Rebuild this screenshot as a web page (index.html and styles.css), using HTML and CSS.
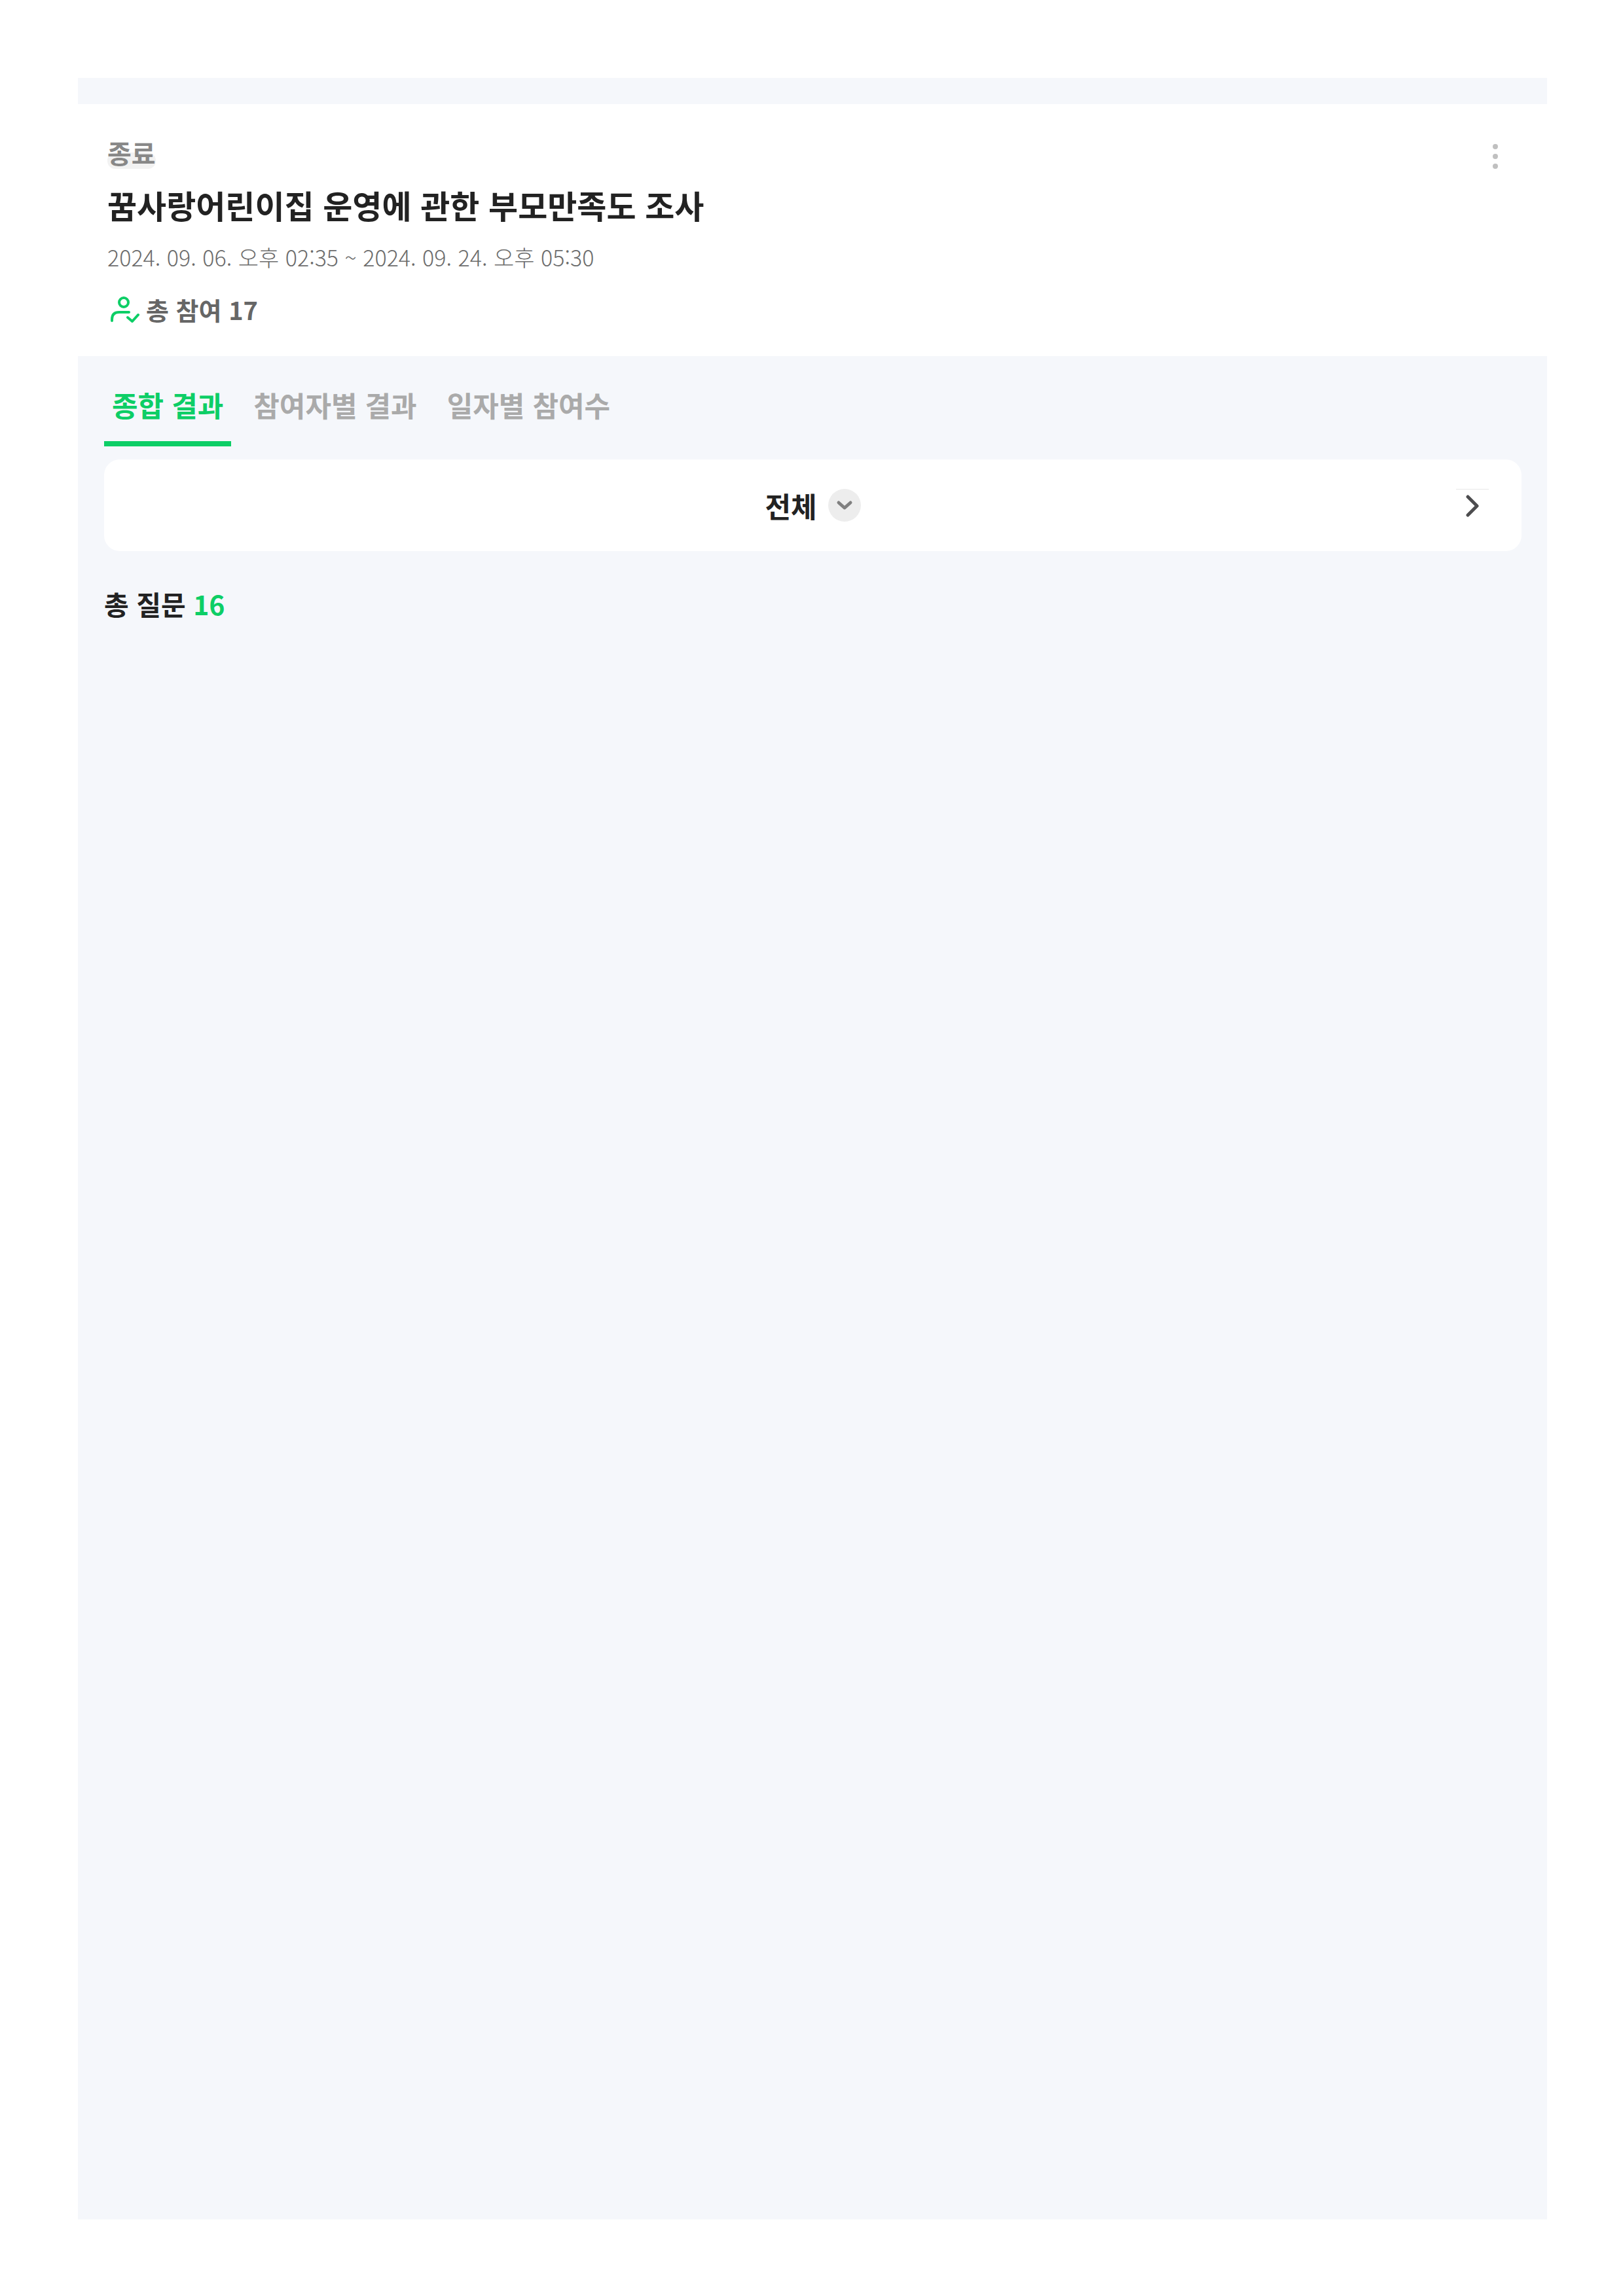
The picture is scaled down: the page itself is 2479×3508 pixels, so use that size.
FILE: index.html
```html
<!DOCTYPE html>
<html lang="ko">
<head>
<meta charset="UTF-8">
<meta name="viewport" content="width=device-width, initial-scale=1.0">
<title>꿈사랑어린이집 운영에 관한 부모만족도 조사</title>
<link rel="stylesheet" href="styles.css">
</head>
<body>

<div class="page">
    <header class="survey-header">
        <div class="survey-info">
            <div class="status-row"><span class="status">종료</span></div>
            <h1 class="title">꿈사랑어린이집 운영에 관한 부모만족도 조사</h1>
            <p class="period">2024. 09. 06. 오후 02:35 ~ 2024. 09. 24. 오후 05:30</p>
            <p class="total">
                <svg class="icon-user" viewBox="0 0 44 42" aria-hidden="true">
                    <circle cx="20" cy="10" r="7"/>
                    <path d="M2 38v-2q0-11 11-11h15M26 33l7 6 9-10"/>
                </svg>
                총 참여 17
            </p>
        </div>
        <button class="more-btn" type="button" aria-label="더보기">
            <svg viewBox="0 0 8 40" aria-hidden="true">
                <circle cx="4" cy="5" r="4"/>
                <circle cx="4" cy="20" r="4"/>
                <circle cx="4" cy="35" r="4"/>
            </svg>
        </button>
    </header>

    <main class="result">
        <nav class="tabs">
            <a class="tab selected" href="#summary">종합 결과</a>
            <a class="tab" href="#members">참여자별 결과</a>
            <a class="tab" href="#daily">일자별 참여수</a>
        </nav>

        <div class="filter">
            <label class="filter-select">
                <select aria-label="질문 선택">
                    <option>전체</option>
                </select>
                <svg class="icon-down" viewBox="0 0 50 50" aria-hidden="true">
                    <circle cx="25" cy="25" r="25"/>
                    <path d="M16 21l9 8 9-8"/>
                </svg>
            </label>
            <button class="next-btn" type="button" aria-label="다음">
                <svg viewBox="0 0 20 34" aria-hidden="true">
                    <path d="M3 3l14 14L3 31"/>
                </svg>
            </button>
        </div>

        <h2 class="question-count">총 질문 <em>16</em></h2>
    </main>
</div>

</body>
</html>
```

FILE: styles.css
```css
* {
    box-sizing: border-box;
}
body, html {
    height: 100%;
    margin: 0;
}
body {
    padding: 119px 116px 117px 119px;
    font-family: "Noto Sans CJK KR", sans-serif;
    color: #222;
    background-color: #fff;
}
.page {
    min-height: 100%;
    padding-top: 40px;
    background: #f5f7fb;
}
h1, h2, p {
    margin: 0;
}
button {
    padding: 0;
    border: 0;
    background: none;
    cursor: pointer;
}
svg {
    display: block;
    fill: none;
    stroke-linecap: round;
    stroke-linejoin: round;
}

/* header */
.survey-header {
    display: flex;
    justify-content: space-between;
    align-items: flex-start;
    padding: 34px 75px 31px 45px;
    background: #fff;
}
.status-row,
.title,
.period,
.total {
    line-height: 80px;
}
.status-row {
    font-size: 40px;
    font-weight: 700;
    color: #888;
}
.status {
    position: relative;
    z-index: 0;
}
.status::before {
    content: "";
    position: absolute;
    z-index: -1;
    left: 0;
    right: 0;
    bottom: 4px;
    height: 25px;
    border-radius: 12px;
    background: #f2f2f2;
}
.title {
    font-size: 49px;
    font-weight: 700;
}
.period {
    font-size: 34px;
    font-weight: 300;
    color: #6c6c6c;
}
.total {
    display: flex;
    align-items: center;
    gap: 10px;
    padding-left: 5px;
    font-size: 38px;
    font-weight: 700;
    color: #666;
}
.icon-user {
    width: 44px;
    height: 42px;
    stroke: #0dce66;
    stroke-width: 4;
}
.more-btn {
    margin-top: 26px;
}
.more-btn svg {
    width: 8px;
    height: 40px;
    fill: #c0c0c0;
}

/* result */
.result {
    padding: 0 39px 0 40px;
}
.tabs {
    display: flex;
    gap: 22px;
    padding-top: 38px;
}
.tab {
    padding: 0 12px 20px;
    border-bottom: 8px solid transparent;
    font-size: 43px;
    font-weight: 700;
    line-height: 72px;
    color: #aaa;
    text-decoration: none;
}
.tab.selected {
    border-color: #0dce66;
    color: #0dce66;
}
.filter {
    display: grid;
    grid-template-columns: 1fr auto 1fr;
    align-items: center;
    height: 140px;
    margin-top: 20px;
    padding: 0 50px;
    border-radius: 24px;
    background: #fff;
}
.filter-select {
    display: flex;
    grid-column: 2;
    align-items: center;
    gap: 16px;
}
.filter-select select {
    appearance: none;
    padding: 0;
    border: 0;
    background: none;
    color: #222;
    font-family: inherit;
    font-size: 43px;
    font-weight: 700;
}
.icon-down {
    width: 50px;
    height: 50px;
    stroke: #808080;
    stroke-width: 5;
}
.icon-down circle {
    fill: #ededed;
    stroke: none;
}
.next-btn {
    display: flex;
    justify-content: center;
    align-items: center;
    justify-self: end;
    width: 50px;
    height: 50px;
    border-top: 1px solid #e8e8e8;
}
.next-btn svg {
    width: 20px;
    height: 34px;
    stroke: #4d4d4f;
    stroke-width: 5;
}
.question-count {
    margin-top: 44px;
    font-size: 41px;
    font-weight: 700;
    line-height: 72px;
}
.question-count em {
    font-style: normal;
    color: #0dce66;
}
```
